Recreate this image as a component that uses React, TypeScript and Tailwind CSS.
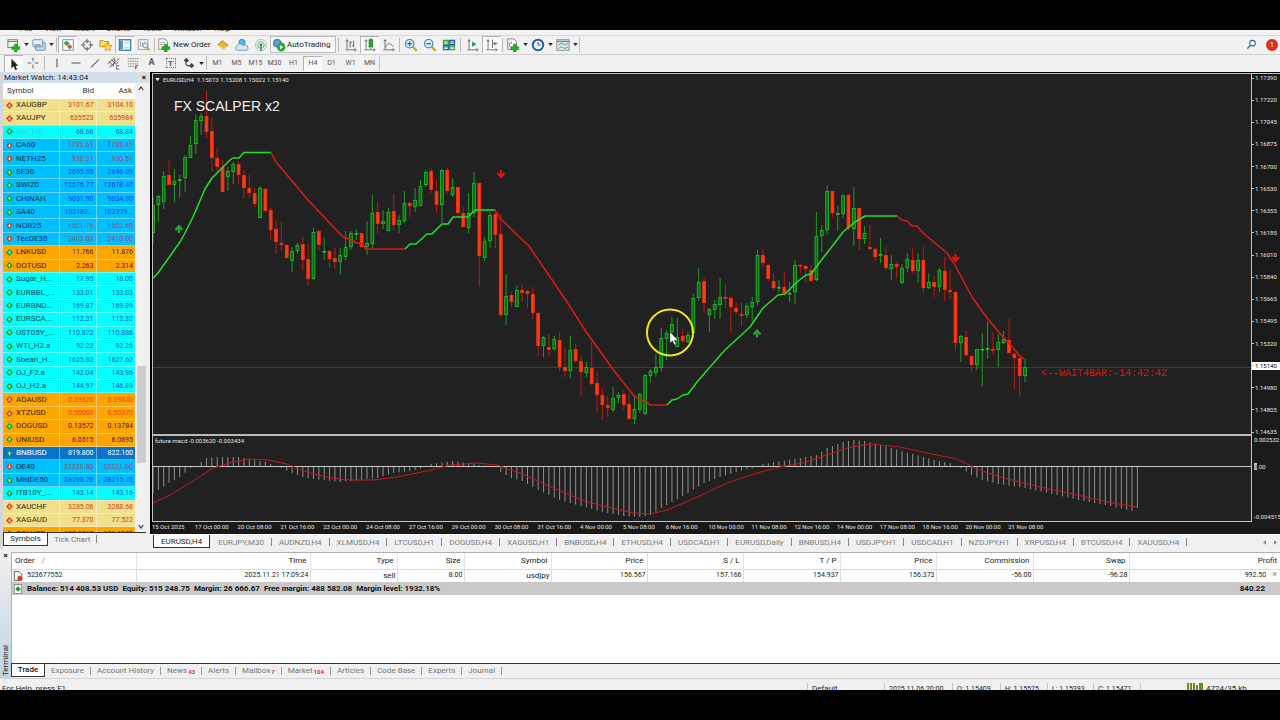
import type { ReactNode } from "react";
import clsx from "clsx";

type Tone = "khaki" | "aqua" | "sky" | "orange" | "active";
type Quote = [symbol: string, bid: string, ask: string, tone: Tone, dir: "up" | "down"];

const quotes: Quote[] = [
  ["XAUGBP", "3101.67", "3104.10", "khaki", "down"],
  ["XAUJPY", "635523", "635984", "khaki", "down"],
  ["VIX_H6", "68.66", "68.84", "aqua", "up"],
  ["CA60", "1782.61", "1783.41", "sky", "down"],
  ["NETH25", "930.31", "930.51", "sky", "down"],
  ["SE30", "2695.65", "2696.09", "sky", "up"],
  ["SWI20", "12676.77", "12678.47", "sky", "up"],
  ["CHINAH", "9031.90", "9034.90", "sky", "up"],
  ["SA40", "102182...", "102379...", "sky", "up"],
  ["NOR25", "1501.75", "1502.65", "sky", "down"],
  ["TecDE30", "3402.00", "3410.00", "sky", "down"],
  ["LNKUSD", "11.766", "11.876", "orange", "up"],
  ["DOTUSD", "2.263", "2.314", "orange", "up"],
  ["Sugar_H...", "17.95", "18.00", "aqua", "up"],
  ["EURBBL_...", "133.01", "133.03", "aqua", "up"],
  ["EURBND...", "169.87", "169.89", "aqua", "up"],
  ["EURSCA...", "112.31", "112.32", "aqua", "up"],
  ["UST05Y_...", "110.872", "110.886", "aqua", "up"],
  ["WTI_H2.a", "92.22", "92.26", "aqua", "up"],
  ["Sbean_H...", "1625.82", "1627.67", "aqua", "up"],
  ["OJ_F2.a", "142.04", "143.96", "aqua", "up"],
  ["OJ_H2.a", "144.97", "146.89", "aqua", "up"],
  ["ADAUSD", "0.39620", "0.39840", "orange", "down"],
  ["XTZUSD", "0.50000", "0.50370", "orange", "down"],
  ["DOGUSD", "0.13572", "0.13784", "orange", "up"],
  ["UNIUSD", "6.0515", "6.0695", "orange", "up"],
  ["BNBUSD", "819.800", "822.100", "active", "up"],
  ["DE40", "23220.80", "23221.60", "sky", "down"],
  ["MidDE50", "28200.70", "28215.70", "sky", "up"],
  ["ITB10Y_...", "143.14", "143.16", "aqua", "up"],
  ["XAUCHF", "3285.06", "3288.68", "khaki", "down"],
  ["XAGAUD", "77.370", "77.522", "khaki", "down"],
  ["SOLUSD", "125.6215", "126.6930", "orange", "up"],
];

const rowTone: Record<Tone, string> = {
  khaki: "bg-[#f0e08c] text-[#2b2618]",
  aqua: "bg-[#00ffff] text-[#0b4a5c]",
  sky: "bg-[#00bfff] text-[#0a2f4d]",
  orange: "bg-[#ffa500] text-[#33240a]",
  active: "bg-[#0a74cc] text-white",
};

const upTone: Record<Tone, string> = {
  khaki: "text-[#1c3fc4]",
  aqua: "text-[#0f5fc0]",
  sky: "text-[#0848e8]",
  orange: "text-[#4a1440]",
  active: "text-white",
};

const downTone: Record<Tone, string> = {
  khaki: "text-[#c8431c]",
  aqua: "text-[#c8431c]",
  sky: "text-[#8a5a72]",
  orange: "text-[#e8480c]",
  active: "text-white",
};

// high, open/close top, open/close bottom, low; 1 = bull, 0 = bear
const candles: number[][] = [
  [197, 205, 233, 243, 1], [195, 196, 205, 222, 1], [171, 176, 202, 209, 1], [160, 175, 185, 185, 0],
  [169, 181, 185, 202, 1], [175, 179, 181, 198, 1], [155, 157, 178, 192, 1], [136, 145, 158, 158, 1],
  [114, 120, 144, 154, 1], [113, 116, 121, 135, 1], [91, 116, 132, 138, 0], [118, 131, 158, 172, 0],
  [148, 158, 167, 172, 0], [160, 167, 192, 192, 0], [167, 171, 177, 191, 1], [162, 164, 172, 184, 1],
  [161, 164, 175, 184, 0], [170, 175, 188, 198, 0], [175, 188, 193, 198, 0], [188, 193, 204, 207, 0],
  [186, 188, 218, 218, 1], [188, 189, 211, 211, 0], [208, 210, 230, 240, 0], [220, 229, 242, 254, 0],
  [222, 243, 245, 251, 0], [244, 245, 258, 258, 0], [247, 251, 261, 272, 1], [243, 245, 251, 254, 1],
  [237, 244, 260, 271, 0], [243, 259, 279, 286, 0], [228, 232, 279, 280, 1], [230, 231, 245, 250, 0],
  [238, 251, 252, 260, 1], [250, 251, 259, 268, 0], [248, 258, 262, 269, 0], [248, 255, 262, 275, 1],
  [231, 247, 257, 260, 1], [231, 233, 247, 250, 1], [229, 233, 234, 240, 1], [233, 233, 247, 248, 0],
  [221, 243, 247, 255, 1], [195, 213, 244, 248, 1], [201, 212, 224, 233, 0], [210, 221, 224, 229, 1],
  [208, 212, 231, 231, 1], [194, 211, 225, 231, 0], [215, 220, 225, 233, 1], [191, 203, 221, 223, 1],
  [202, 203, 206, 217, 0], [188, 200, 207, 212, 1], [180, 186, 206, 206, 1], [170, 172, 185, 187, 1],
  [168, 171, 190, 193, 0], [180, 191, 205, 213, 0], [169, 170, 205, 223, 1], [168, 170, 191, 193, 0],
  [178, 187, 195, 197, 1], [187, 187, 213, 217, 0], [207, 213, 227, 227, 0], [193, 213, 228, 233, 1],
  [172, 183, 213, 217, 1], [183, 183, 256, 287, 0], [237, 241, 258, 261, 1], [212, 215, 241, 248, 1],
  [212, 214, 235, 248, 0], [214, 234, 315, 317, 0], [274, 296, 315, 325, 1], [292, 295, 302, 307, 0],
  [286, 290, 307, 307, 1], [285, 290, 293, 302, 0], [290, 291, 294, 308, 0], [287, 294, 313, 320, 0],
  [312, 313, 346, 356, 0], [336, 337, 346, 357, 1], [334, 347, 350, 356, 0], [336, 339, 349, 351, 1],
  [332, 340, 367, 371, 0], [347, 367, 371, 377, 0], [336, 350, 371, 378, 1], [344, 349, 361, 363, 0],
  [355, 361, 372, 396, 0], [362, 367, 373, 377, 1], [342, 368, 384, 385, 0], [372, 383, 395, 413, 0],
  [388, 395, 405, 420, 0], [396, 405, 408, 417, 0], [387, 398, 410, 412, 1], [392, 395, 398, 403, 1],
  [390, 394, 405, 410, 0], [393, 404, 419, 420, 0], [395, 409, 419, 424, 1], [393, 394, 410, 413, 1],
  [374, 375, 414, 415, 1], [369, 371, 376, 382, 1], [353, 367, 373, 377, 1], [328, 338, 368, 372, 1],
  [330, 333, 339, 360, 1], [317, 324, 332, 335, 1], [318, 337, 347, 347, 1], [329, 336, 341, 343, 0],
  [332, 335, 342, 343, 1], [294, 298, 333, 338, 1], [268, 282, 298, 301, 1], [278, 281, 303, 313, 0],
  [308, 309, 315, 332, 1], [300, 304, 310, 319, 1], [278, 297, 305, 319, 1], [284, 297, 298, 308, 0],
  [296, 298, 307, 333, 0], [302, 308, 312, 314, 0], [303, 314, 315, 326, 0], [303, 306, 315, 318, 1],
  [297, 302, 307, 321, 1], [250, 255, 302, 305, 1], [250, 255, 263, 267, 0], [264, 265, 279, 281, 0],
  [273, 281, 288, 290, 0], [280, 287, 288, 293, 1], [272, 287, 293, 296, 0], [282, 293, 294, 302, 1],
  [260, 265, 292, 304, 1], [264, 265, 266, 273, 0], [265, 266, 269, 283, 0], [265, 270, 281, 282, 0],
  [212, 236, 280, 281, 1], [225, 230, 236, 252, 1], [185, 191, 230, 235, 1], [191, 191, 213, 217, 0],
  [206, 213, 215, 231, 1], [195, 195, 214, 218, 1], [194, 195, 228, 230, 0], [187, 208, 229, 246, 1],
  [208, 208, 239, 250, 0], [226, 233, 239, 244, 1], [225, 247, 249, 250, 0], [248, 249, 257, 261, 0],
  [238, 254, 256, 263, 1], [247, 255, 268, 270, 0], [255, 264, 269, 280, 1], [263, 264, 267, 279, 0],
  [264, 268, 283, 284, 1], [253, 259, 268, 272, 1], [248, 260, 271, 273, 0], [253, 260, 271, 283, 1],
  [247, 260, 288, 293, 0], [273, 282, 288, 289, 1], [276, 282, 287, 297, 0], [268, 270, 287, 292, 1],
  [257, 271, 290, 301, 0], [269, 290, 292, 299, 0], [292, 292, 343, 351, 0], [335, 336, 343, 362, 1],
  [331, 337, 355, 357, 0], [355, 356, 365, 372, 0], [349, 349, 365, 370, 1], [333, 349, 350, 386, 1],
  [321, 348, 350, 359, 1], [332, 349, 350, 355, 0], [334, 342, 350, 367, 1], [331, 339, 343, 344, 1],
  [319, 340, 353, 353, 0], [352, 354, 358, 389, 0], [358, 358, 376, 397, 0], [359, 367, 376, 382, 1],
];

const maUp = [
  "153,278 158,273 180,242 185,233 193,217 205,189 212,178 222,168 230,160 233,158 239,158 244,152.5 271,152.5",
  "405,249 410,244 416,244 427,234 432,234 442,224 448,224 453,217 468,217 475,210 495,210",
  "667,405 672,400 677,399 683,395 688,394 697,382 710,367 725,350 750,327 763,308 778,295 785,294 797,282 806,275 811,274 820,262 837,240 843,232 855,222 865,216 897,216",
];
const maDown = [
  "271,152.5 276,162 308,200 325,218 343,237 349,239 357,243 362,244 366,249 405,249",
  "495,210 500,218 515,233 529,246 565,299 587,333 612,368 634,396 639,399 647,402 650,405 667,405",
  "897,216 902,220 907,221 912,226 917,226 923,233 947,253 955,265 972,297 987,318 1003,337 1008,342 1020,356 1024,359",
];

// bar index, bar end; values between are interpolated
const macdKeys: number[][] = [
  [0, 493], [1, 490], [3, 483], [5, 477], [7, 468], [8, 466], [9, 462], [10, 458], [12, 457], [16, 457],
  [19, 460], [21, 462], [23, 466], [24, 468], [26, 473], [28, 477], [30, 479], [35, 482], [39, 480],
  [42, 478], [45, 473], [48, 471], [51, 467], [52, 464], [56, 461], [61, 465], [63, 466], [64, 467],
  [65, 472], [67, 478], [69, 481], [72, 490], [76, 500], [80, 506], [84, 512], [88, 516], [91, 517],
  [93, 515], [95, 508], [97, 502], [100, 493], [103, 483], [106, 477], [109, 472], [112, 468], [114, 464],
  [116, 462], [120, 459], [124, 455], [126, 448], [129, 442], [131, 440], [133, 441], [136, 445],
  [140, 451], [144, 457], [146, 460], [149, 463], [150, 466], [151, 468], [153, 475], [155, 480],
  [158, 484], [163, 488], [168, 494], [173, 500], [178, 505], [183, 511], [184, 508],
];

const macdBars = Array.from({ length: 185 }, (_, i) => {
  const k = macdKeys.findIndex(([n]) => n >= i);
  const [n1, y1] = macdKeys[k];
  if (n1 === i) return y1;
  const [n0, y0] = macdKeys[k - 1];
  return y0 + ((y1 - y0) * (i - n0)) / (n1 - n0);
});

const signal =
  "153,503 170,495 190,483 213,468 233,462 250,459 268,460 287,464 307,472 330,478 350,480 373,480 397,477 427,471 450,465 477,463 497,465 520,473 553,488 587,502 613,508 633,513 650,514 667,510 693,499 727,483 757,473 780,467 803,463 827,455 847,448 870,444 900,447 927,453 957,459 977,469 1000,477 1040,487 1077,495 1113,503 1137,507";

const prices = [
  "1.17390", "1.17220", "1.17045", "1.16875", "1.16700", "1.16530", "1.16355", "1.16185", "1.16010",
  "1.15840", "1.15665", "1.15495", "1.15320", "1.15140", "1.14980", "1.14805", "1.14635",
];

const dates = [
  "15 Oct 2025", "17 Oct 00:00", "20 Oct 08:00", "21 Oct 16:00", "23 Oct 00:00", "24 Oct 08:00",
  "27 Oct 16:00", "29 Oct 00:00", "30 Oct 08:00", "31 Oct 16:00", "4 Nov 00:00", "5 Nov 08:00",
  "6 Nov 16:00", "10 Nov 00:00", "11 Nov 08:00", "12 Nov 16:00", "14 Nov 00:00", "17 Nov 08:00",
  "18 Nov 16:00", "20 Nov 00:00", "21 Nov 08:00",
];

const chartTabs = [
  "EURUSD,H4", "EURJPY,M30", "AUDNZD,H4", "XLMUSD,H4", "LTCUSD,H1", "DOGUSD,H4", "XAGUSD,H1", "BNBUSD,H4",
  "ETHUSD,H4", "USDCAD,H1", "EURUSD,Daily", "BNBUSD,H4", "USDJPY,H1", "USDCAD,H1", "NZDJPY,H1", "XRPUSD,H4",
  "BTCUSD,H4", "XAUUSD,H4",
];

const terminalTabs: [string, string?][] = [
  ["Trade"], ["Exposure"], ["Account History"], ["News", "43"], ["Alerts"], ["Mailbox", "7"],
  ["Market", "104"], ["Articles"], ["Code Base"], ["Experts"], ["Journal"],
];

const X0 = 153;
const STEP = 5.35;

function Icon({ children, size = "size-[14px]" }: { children: ReactNode; size?: string }) {
  return (
    <svg viewBox="0 0 16 16" className={clsx("shrink-0", size)} fill="none" aria-hidden="true">
      {children}
    </svg>
  );
}

function Caret() {
  return (
    <svg viewBox="0 0 6 4" className="w-[5px] h-[3px] shrink-0" aria-hidden="true">
      <path d="M0 0h6L3 4z" fill="#222" />
    </svg>
  );
}

function Tool({ label, pressed, caret, children }: { label: string; pressed?: boolean; caret?: boolean; children: ReactNode }) {
  return (
    <button
      type="button"
      aria-label={label}
      className={clsx(
        "h-[17px] shrink-0 flex items-center justify-center gap-[3px]",
        caret ? "w-[25px]" : "w-[19px]",
        pressed && "bg-[#fafafa] border-l border-t border-[#b4b4b4]"
      )}
    >
      {children}
      {caret && <Caret />}
    </button>
  );
}

function Sep({ wide }: { wide?: boolean }) {
  return (
    <span className={clsx("shrink-0 flex justify-center", wide ? "w-[5px]" : "w-[3px]")}>
      <span className="w-px h-[14px] bg-[#b8b8b8]" />
    </span>
  );
}

const Plus = () => <path d="M8.5 7h3v3h3v3h-3v3h-3v-3h-3v-3h3z" fill="#22b02a" stroke="#0d7a17" strokeWidth=".6" />;
const Axes = () => <path d="M3.5 2v11M1.5 13.5h12M2 4l1.500-2 1.500 2M12 12l2 1.500-2 1.500" stroke="#666" strokeWidth="1" />;

function StandardToolbar() {
  return (
    <div className="h-[19px] flex items-center pl-[5px] pb-px border-t border-[#d8d8d8] bg-[#f1f1f1]">
      <Tool label="New chart" caret>
        <Icon>
          <rect x="1" y="2" width="11" height="9" fill="#e9f6e9" stroke="#4a8a5a" />
          <path d="M1 4h11" stroke="#4a8a5a" />
          <Plus />
        </Icon>
      </Tool>
      <Tool label="Profiles" caret>
        <Icon>
          <rect x="4" y="5" width="11" height="9" rx="1" fill="#c6dcef" stroke="#5b87ad" />
          <rect x="1" y="2" width="11" height="8" rx="1" fill="#eaf4fc" stroke="#5b87ad" />
          <path d="M3 8h7" stroke="#5b87ad" strokeWidth="1.500" />
        </Icon>
      </Tool>
      <Sep />
      <Tool label="Market Watch" pressed>
        <Icon>
          <rect x="2" y="2" width="12" height="12" fill="#fff" stroke="#5f87a8" />
          <path d="M3 6l3-3 4 3-3 3z" fill="#35a23a" />
          <path d="M7 10l3-3 3 3-3 3z" fill="#e2552c" />
        </Icon>
      </Tool>
      <Tool label="Data Window">
        <Icon>
          <circle cx="8" cy="8" r="4.500" stroke="#666" strokeWidth="1.200" />
          <path d="M8 1v5M8 10v5M1 8h5M10 8h5" stroke="#666" strokeWidth="1.200" />
        </Icon>
      </Tool>
      <Tool label="Navigator">
        <Icon>
          <path d="M1 3h4l1 1h5v6H1z" fill="#f9dc72" stroke="#b78d1f" />
          <path d="M10 5l1.600 3.200 3.400.5-2.500 2.400.6 3.500L10 13l-3.100 1.600.6-3.500L5 8.700l3.400-.5z" fill="#ffd83a" stroke="#b78d1f" strokeWidth=".8" />
        </Icon>
      </Tool>
      <Tool label="Terminal" pressed>
        <Icon>
          <rect x="1.500" y="2" width="13" height="12" fill="#eef6fc" stroke="#39739f" strokeWidth="1.400" />
          <path d="M2 3h3.500v10H2z" fill="#4f93c4" />
          <path d="M7 5.500h6M7 11h6" stroke="#b9d4e8" />
        </Icon>
      </Tool>
      <Tool label="Strategy Tester">
        <Icon>
          <rect x="1.500" y="2" width="11" height="11" fill="#f7f7f7" stroke="#8e9aa4" />
          <path d="M4 4v6M6.500 5v5M9 4v4" stroke="#8e9aa4" />
          <circle cx="9.500" cy="8.500" r="2.800" fill="#d9ecfa" stroke="#6a8cab" />
          <path d="M11.500 11l3 3" stroke="#c9a227" strokeWidth="2" />
        </Icon>
      </Tool>
      <Sep />
      <button type="button" className="flex items-center gap-[2px] h-[17px] w-[57px] pl-px shrink-0 text-[#222] text-[8px] whitespace-nowrap">
        <Icon>
          <path d="M2 1h7l3 3v9H2z" fill="#fff" stroke="#888" />
          <path d="M4 5h5M4 7.500h4" stroke="#999" />
          <Plus />
        </Icon>
        New Order
      </button>
      <Tool label="MetaEditor">
        <Icon>
          <path d="M2 8l5-5 7 5.500-5 4.500z" fill="#eeb52c" stroke="#a8780e" />
          <path d="M2 8.500l7 4L14 9" stroke="#fff0b0" />
        </Icon>
      </Tool>
      <Tool label="Virtual Hosting">
        <Icon>
          <circle cx="8" cy="5" r="3.500" fill="#5fb2e8" stroke="#2d7fb8" />
          <path d="M2 14a3 3 0 010-5 4 4 0 017-.5 3 3 0 014.500 5.500z" fill="#d7e6f3" stroke="#6b93b5" />
        </Icon>
      </Tool>
      <Tool label="Signals">
        <Icon>
          <circle cx="8" cy="8" r="6.300" stroke="#a9bcb0" />
          <circle cx="8" cy="8" r="3.800" stroke="#6fa583" />
          <circle cx="8" cy="8" r="1.700" fill="#2c9b4b" />
          <path d="M8 8v7" stroke="#2c9b4b" strokeWidth="1.600" />
        </Icon>
      </Tool>
      <button
        type="button"
        className="flex items-center gap-px h-[17px] w-[66px] pl-px shrink-0 border border-[#bdbdbd] bg-[#f8f8f8] text-[#222] text-[8px] whitespace-nowrap"
      >
        <Icon>
          <path d="M2 8l5-5 7 4-5 5z" fill="#f2c233" stroke="#aa8413" />
          <circle cx="6" cy="6" r="4.500" fill="#5f9fca" stroke="#35709a" />
          <circle cx="10.500" cy="10.500" r="4.800" fill="#25a834" />
          <path d="M9 8l4 2.500L9 13z" fill="#fff" />
        </Icon>
        AutoTrading
      </button>
      <Sep wide />
      <Tool label="Bar Chart">
        <Icon>
          <Axes />
          <path d="M7 4v7M7 5h2M11 3v7M11 9H9" stroke="#555" />
        </Icon>
      </Tool>
      <Tool label="Candlesticks" pressed>
        <Icon>
          <Axes />
          <path d="M9 0v13" stroke="#138a28" />
          <rect x="7" y="2" width="4" height="8" fill="#22b02a" stroke="#138a28" />
        </Icon>
      </Tool>
      <Tool label="Line Chart">
        <Icon>
          <Axes />
          <path d="M4 11c2-6 5-6 9-1" stroke="#666" />
        </Icon>
      </Tool>
      <Sep />
      <Tool label="Zoom In">
        <Icon>
          <path d="M10 10l4.500 4.500" stroke="#c9a227" strokeWidth="2.600" />
          <circle cx="6.500" cy="6.500" r="4.800" fill="#d9effc" stroke="#3a80b4" strokeWidth="1.300" />
          <path d="M4 6.500h5M6.500 4v5" stroke="#1f6fae" strokeWidth="1.500" />
        </Icon>
      </Tool>
      <Tool label="Zoom Out">
        <Icon>
          <path d="M10 10l4.500 4.500" stroke="#c9a227" strokeWidth="2.600" />
          <circle cx="6.500" cy="6.500" r="4.800" fill="#d9effc" stroke="#3a80b4" strokeWidth="1.300" />
          <path d="M4 6.500h5" stroke="#1f6fae" strokeWidth="1.500" />
        </Icon>
      </Tool>
      <Tool label="Tile Windows">
        <Icon>
          <path d="M1 2h7v6H1zM8 8h7v6H8z" fill="#3aa640" />
          <path d="M8 2h7v6H8zM1 8h7v6H1z" fill="#2f62ad" />
          <path d="M2.500 4.500h4M9.500 4.500h4M2.500 10.500h4M9.500 10.500h4M2.500 6h4M9.500 6h4M2.500 12h4M9.500 12h4" stroke="#fff" />
        </Icon>
      </Tool>
      <Sep wide />
      <Tool label="Auto Scroll">
        <Icon>
          <Axes />
          <path d="M7 4l5 3-5 3z" fill="#1f8f78" />
        </Icon>
      </Tool>
      <Tool label="Chart Shift" pressed>
        <Icon>
          <Axes />
          <path d="M8.500 2v9" stroke="#555" />
          <path d="M14 6.500H10M12 4.500L10 6.500l2 2" stroke="#444" />
        </Icon>
      </Tool>
      <Sep />
      <Tool label="Indicators" caret>
        <Icon>
          <path d="M2 1h7l3 3v9H2z" fill="#fff" stroke="#777" />
          <path d="M4 10V6h2V4" stroke="#777" />
          <Plus />
        </Icon>
      </Tool>
      <Tool label="Periods" caret>
        <Icon>
          <circle cx="8" cy="8" r="6" fill="#eef6ff" stroke="#1d5fa8" strokeWidth="2.200" />
          <path d="M8 4.500V8h3" stroke="#333" />
        </Icon>
      </Tool>
      <Tool label="Templates" caret>
        <Icon>
          <rect x="1" y="2" width="14" height="12" fill="#e3eef2" stroke="#6c8794" />
          <path d="M1 4h14" stroke="#6c8794" strokeWidth="1.500" />
          <path d="M3 8l3-2 4 2 4-2M3 12l3-2 4 2 4-2" stroke="#4f8a78" />
        </Icon>
      </Tool>
      <span className="w-px h-[16px] bg-[#c4c4c4]" />
      <div className="ml-auto flex items-center gap-[9px] pr-[2px]">
        <button type="button" aria-label="Search" className="flex">
          <Icon size="size-[11px]">
            <circle cx="9.500" cy="6" r="4" fill="#fff" stroke="#3c5fa0" strokeWidth="1.500" />
            <path d="M6.500 9L2 14" stroke="#3c5fa0" strokeWidth="2" />
          </Icon>
        </button>
        <button
          type="button"
          aria-label="Notifications"
          className="size-[12px] rounded-full bg-[#d8321e] text-white text-[7px] leading-[12px] text-center"
        >
          1
        </button>
      </div>
    </div>
  );
}

function LineToolbar() {
  return (
    <div className="h-[18px] flex items-center pl-[4px] pb-px border-t border-[#d0d0d0] bg-[#f1f1f1]">
      <Tool label="Cursor" pressed>
        <Icon>
          <path d="M5 2v11l2.700-2.500L9.500 15l2-.9-1.800-4.200H13z" fill="#222" />
        </Icon>
      </Tool>
      <Tool label="Crosshair">
        <Icon>
          <path d="M8 2v4M8 10v4M2 8h4M10 8h4" stroke="#666" strokeWidth="1.200" />
        </Icon>
      </Tool>
      <Sep wide />
      <Tool label="Vertical line">
        <Icon>
          <path d="M8 3v10" stroke="#555" strokeWidth="1.200" />
        </Icon>
      </Tool>
      <Tool label="Horizontal line">
        <Icon>
          <path d="M3 8h10" stroke="#555" strokeWidth="1.200" />
        </Icon>
      </Tool>
      <Tool label="Trendline">
        <Icon>
          <path d="M3.500 13l9-9" stroke="#555" strokeWidth="1.200" />
        </Icon>
      </Tool>
      <Tool label="Equidistant Channel">
        <Icon>
          <path d="M1 9l8-7M3 13l11-10M2 6l5 5M5 4l5 5M7 12L9 3M10 10l3-3M14 11h-3v4h3" stroke="#555" />
        </Icon>
      </Tool>
      <Tool label="Fibonacci">
        <Icon>
          <path d="M2 3h12M2 6h12M2 9h12M2 12h7" stroke="#888" strokeDasharray="2 .6" />
          <path d="M11 15v-4h3M11 13h2" stroke="#555" />
        </Icon>
      </Tool>
      <button type="button" className="w-[19px] text-[9px] font-bold text-[#555]">A</button>
      <button type="button" aria-label="Text label" className="w-[19px] flex justify-center">
        <span className="size-[10px] border border-dotted border-[#777] text-[8px] leading-[9px] font-bold text-[#555]">T</span>
      </button>
      <Tool label="Arrows" caret>
        <Icon>
          <path d="M2 5l3-3 3 3-3 3zM8 11l3 3 3-3-3-3z" fill="#444" />
          <path d="M4 8l2 3h3" stroke="#444" strokeWidth="1.400" />
        </Icon>
      </Tool>
      <Sep />
      {["M1", "M5", "M15", "M30", "H1", "H4", "D1", "W1", "MN"].map((tf) => (
        <button
          key={tf}
          type="button"
          className={clsx(
            "w-[19px] h-[15px] shrink-0 text-center text-[7px] text-[#555]",
            tf === "H4" && "bg-[#fafafa] border-l border-t border-[#b4b4b4]"
          )}
        >
          {tf}
        </button>
      ))}
      <span className="w-px h-[15px] bg-[#c4c4c4]" />
    </div>
  );
}

function MarketWatch() {
  return (
    <section className="w-[150px] shrink-0 flex flex-col border-l-[3px] border-[#d3d7dc] bg-[#f0f0f0]">
      <div className="h-[11px] flex items-center justify-between pr-[4px] pl-px bg-[#d3dfea]">
        <h2 className="text-[8px] leading-[11px] text-[#1c2530]">Market Watch: 14:43:04</h2>
        <button type="button" aria-label="Close" className="text-[8px] leading-[10px] font-bold text-black">×</button>
      </div>
      <div className="flex h-[449px] overflow-hidden">
        <table className="w-[132px] h-[458px] shrink-0 table-fixed border-collapse">
          <colgroup>
            <col className="w-[56px]" />
            <col className="w-[37px]" />
            <col />
          </colgroup>
          <thead className="bg-white text-[8px] text-[#333]">
            <tr className="h-[16px]">
              <th className="text-left font-normal pl-[4px] py-0">Symbol</th>
              <th className="text-right font-normal pr-[2px] py-0">Bid</th>
              <th className="text-right font-normal pr-[3px] py-0">Ask</th>
            </tr>
          </thead>
          <tbody className="leading-[10px]">
            {quotes.map(([symbol, bid, ask, tone, dir]) => (
              <tr key={symbol} className={clsx("border-b border-white/40", rowTone[tone])}>
                <td className="p-0">
                  <span className="flex items-center gap-[3px] pl-[3px] text-[8px] whitespace-nowrap">
                    <svg viewBox="0 0 8 8" className="size-[7px] shrink-0" aria-hidden="true">
                      <path d="M4 0l4 4-4 4-4-4z" fill={dir === "up" ? "#16a02c" : "#cf4420"} />
                      <path d={dir === "up" ? "M4 2l2 2H4.500v2h-1V4H2z" : "M4 6l2-2H4.500V2h-1v2H2z"} fill="#fff" opacity=".8" />
                    </svg>
                    <span className={clsx(symbol === "VIX_H6" && "text-[#5cc9cf]")}>{symbol}</span>
                  </span>
                </td>
                {[bid, ask].map((value, n) => (
                  <td
                    key={n}
                    className={clsx(
                      "py-0 pl-0 pr-[2px] text-right text-[7px] border-l border-white/40",
                      dir === "up" ? upTone[tone] : downTone[tone]
                    )}
                  >
                    {value}
                  </td>
                ))}
              </tr>
            ))}
          </tbody>
        </table>
        <div className="w-[12px] shrink-0 flex flex-col items-center justify-between py-[3px]">
          <svg viewBox="0 0 8 6" className="w-[6px] h-[5px]" fill="none" aria-hidden="true">
            <path d="M1 5l3-4 3 4" stroke="#333" strokeWidth="1.500" />
          </svg>
          <div className="w-[9px] flex-1 flex flex-col">
            <span className="flex-[275]" />
            <span className="flex-[97] bg-[#cdcdcd]" />
            <span className="flex-[61]" />
          </div>
          <svg viewBox="0 0 8 6" className="w-[6px] h-[5px]" fill="none" aria-hidden="true">
            <path d="M1 1l3 4 3-4" stroke="#333" strokeWidth="1.500" />
          </svg>
        </div>
      </div>
      <div className="flex items-start border-t border-[#333] mr-[4px] text-[8px] leading-[12px]">
        <button type="button" className="w-[45px] h-[13px] bg-white border-b border-x border-[#333] text-[#222]">Symbols</button>
        <button type="button" className="px-[6px] h-[13px] text-[#777]">Tick Chart</button>
        <span className="w-px h-[8px] mt-[2px] bg-[#888]" />
      </div>
    </section>
  );
}

function Candles() {
  return (
    <g>
      {candles.map(([high, top, bottom, low, bull], i) => {
        const x = X0 + i * STEP;
        return (
          <g key={i}>
            <path d={`M${x} ${high}V${low}`} stroke={bull ? "#1f9a24" : "#b81c12"} strokeWidth="1" />
            <rect
              x={x - 1.4}
              y={top + 0.4}
              width={2.8}
              height={Math.max(bottom - top - 0.8, 0.8)}
              fill={bull ? "#0b6b12" : "#ff3c17"}
              stroke={bull ? "#22b52a" : "#f5300f"}
              strokeWidth=".9"
            />
          </g>
        );
      })}
    </g>
  );
}

function Arrow({ x, y, up }: { x: number; y: number; up?: boolean }) {
  return (
    <path
      transform={`translate(${x} ${y})`}
      d={up ? "M-3.500 1L0-3l3.500 4M0-2.500V4" : "M-3.500-1L0 3l3.500-4M0 2.500V-4"}
      stroke={up ? "#1faa35" : "#e81414"}
      strokeWidth="2"
      fill="none"
    />
  );
}

function Chart() {
  return (
    <svg viewBox="153 74 1098 447" preserveAspectRatio="none" className="w-full h-[447px] block" role="img" aria-label="EURUSD H4 chart">
      <rect x="153" y="74" width="1098" height="447" fill="#212121" />
      <path d="M153 367.500H1251" stroke="#3c3c3c" />
      <Candles />
      <g fill="none" strokeWidth="1.500" strokeLinejoin="round">
        {maUp.map((points) => (
          <polyline key={points} points={points} stroke="#22e02c" />
        ))}
        {maDown.map((points) => (
          <polyline key={points} points={points} stroke="#d81c1c" />
        ))}
      </g>
      <Arrow x={179} y={229} up />
      <Arrow x={757} y={333.5} up />
      <Arrow x={501} y={174} />
      <Arrow x={955.5} y={258} />
      <rect x="153" y="434" width="1098" height="2" fill="#b9b9b9" />
      <path d={macdBars.map((y, i) => `M${X0 + i * STEP} 466.500V${y}`).join("")} stroke="#9c9c9c" strokeWidth=".9" />
      <path d="M153 466.500H1251" stroke="#c8c8c8" />
      <polyline points={signal} fill="none" stroke="#c01a1f" strokeWidth="1" />
      <circle cx="670" cy="332.500" r="23" fill="none" stroke="#ece81e" strokeWidth="2" />
      <path d="M670 332v11l2.500-2.200 1.800 4 1.700-.8-1.800-3.800h3.500z" fill="#fff" stroke="#444" strokeWidth=".4" />
    </svg>
  );
}

function ChartPanel() {
  return (
    <section className="flex-1 min-w-0 flex flex-col bg-[#f0f0f0]">
      <div className="bg-[#1a1a1a] border-t border-l-2 border-black text-[#e4e4e4]">
        <div className="flex border-t border-l border-[#c4c4c4]">
          <div className="relative flex-1 min-w-0 border-r border-b border-[#c4c4c4]">
            <Chart />
            <p className="absolute left-[2px] top-px flex items-center gap-[3px] text-[6px] leading-[9px] whitespace-pre">
              <svg viewBox="0 0 6 4" className="w-[5px] h-[3px]" aria-hidden="true">
                <path d="M0 0h6L3 4z" fill="#fff" />
              </svg>
              EURUSD,H4  1.15073 1.15208 1.15022 1.15140
            </p>
            <h1 className="absolute left-[21px] top-[24px] text-[14px] leading-[16px] text-[#f0f0f0] font-['Liberation_Sans',sans-serif]">
              FX SCALPER x2
            </h1>
            <p className="absolute right-[84px] top-[294px] text-[10px] leading-[12px] text-[#dc1414] font-['Liberation_Mono',monospace]">
              &lt;--WAIT4BAR:-14:42:42
            </p>
            <p className="absolute left-[2px] top-[363px] text-[6px] leading-[8px]">future macd -0.003620 -0.003434</p>
          </div>
          <div className="w-[28px] shrink-0 overflow-hidden text-[6px] leading-[8px]">
            <ul className="h-[362px] flex flex-col justify-between">
              {prices.map((price) => (
                <li key={price} className={clsx("flex items-center gap-px", price === "1.15140" && "bg-white text-black")}>
                  <span className="w-[2px] h-px bg-[#c4c4c4]" />
                  {price}
                </li>
              ))}
            </ul>
            <ul className="h-[85px] flex flex-col justify-between pl-[2px] whitespace-nowrap">
              <li>0.002532</li>
              <li className="mb-[23px]">
                <span className="bg-[#c4c4c4] text-[#555]">0</span>.00
              </li>
              <li>-0.004515</li>
            </ul>
          </div>
        </div>
        <ul className="h-[12px] w-[79.7%] grid grid-cols-[repeat(21,minmax(0,1fr))] text-[6px] leading-[10px] whitespace-nowrap">
          {dates.map((date) => (
            <li key={date}>{date}</li>
          ))}
        </ul>
      </div>
      <div className="flex h-[15px] border-t border-white text-[8px] leading-[13px] overflow-hidden">
        <nav className="flex pl-[3px]">
          {chartTabs.map((tab, i) =>
            i === 0 ? (
              <button key={i} type="button" className="h-[13px] px-[7px] mr-px bg-white border-x border-b border-[#333] text-[#222]">
                {tab}
              </button>
            ) : (
              <span key={i} className="flex items-center">
                <button type="button" className="px-[7px] text-[#7d7d7d]">{tab}</button>
                <span className="w-px h-[8px] bg-[#888]" />
              </span>
            )
          )}
        </nav>
        <span className="ml-auto flex items-center gap-[8px] pr-[3px]">
          <svg viewBox="0 0 4 6" className="w-[3px] h-[5px]" aria-hidden="true">
            <path d="M4 0v6L0 3z" fill="#888" />
          </svg>
          <svg viewBox="0 0 4 6" className="w-[3px] h-[5px]" aria-hidden="true">
            <path d="M0 0v6l4-3z" fill="#888" />
          </svg>
        </span>
      </div>
    </section>
  );
}

const columns: [string, string, string][] = [
  ["Time", "w-[174px]", "2025.11.21 17:09:24"],
  ["Type", "w-[87px]", "sell"],
  ["Size", "w-[67px]", "8.00"],
  ["Symbol", "w-[87px]", "usdjpy"],
  ["Price", "w-[96px]", "156.567"],
  ["S / L", "w-[96px]", "157.166"],
  ["T / P", "w-[97px]", "154.937"],
  ["Price", "w-[96px]", "156.373"],
  ["Commission", "w-[97px]", "-56.00"],
  ["Swap", "w-[96px]", "-96.28"],
];

function Terminal() {
  return (
    <section className="flex bg-[#f0f0f0] border-b border-[#d4d4d4]">
      <div className="w-[11px] shrink-0 flex flex-col items-center justify-between pt-[3px] pb-[2px] bg-linear-to-b from-[#f0f0f0] to-[#c3d3e2]">
        <button type="button" aria-label="Close terminal" className="text-[8px] leading-[8px] font-bold text-black">×</button>
        <h2 className="[writing-mode:vertical-rl] rotate-180 text-[8px] leading-[10px] text-[#222]">Terminal</h2>
      </div>
      <div className="flex-1 min-w-0 pt-[3px]">
        <div className="min-h-[111px] bg-white border-t border-[#b0b0b0] border-l">
          <table className="w-full table-fixed border-collapse text-[#222] text-[8px] leading-[11px]">
            <thead>
              <tr className="h-[16px] border-b border-[#dcdcdc]">
                <th className="w-[124px] py-0 pl-[3px] text-left font-normal border-r border-[#e4e4e4]">
                  Order <span className="ml-[5px] text-[#888]">/</span>
                </th>
                {columns.map(([name, width], i) => (
                  <th key={i} className={clsx("py-0 pl-0 pr-[3px] text-right font-normal border-r border-[#e4e4e4]", width)}>
                    {name}
                  </th>
                ))}
                <th className="py-0 pl-0 pr-[3px] text-right font-normal">Profit</th>
              </tr>
            </thead>
            <tbody>
              <tr className="h-[13px]">
                <td className="py-0 pl-px pr-0 border-r border-[#dcdcdc]">
                  <span className="flex items-center gap-[4px] text-[7px]">
                    <Icon size="size-[10px]">
                      <path d="M2 1h8l4 4v10H2z" fill="#fff" stroke="#555" strokeWidth="1.500" />
                      <circle cx="11" cy="11.500" r="4" fill="#c9481c" />
                    </Icon>
                    523677552
                  </span>
                </td>
                {columns.map(([, , value], i) => (
                  <td key={i} className={clsx("py-0 pl-0 pr-px text-right border-r border-[#dcdcdc]", /\d/.test(value) && "text-[7px]")}>
                    {value}
                  </td>
                ))}
                <td className="py-0 pl-0 pr-[3px] text-right text-[7px]">
                  992.50
                  <button type="button" aria-label="Close order" className="ml-[6px] text-[9px] leading-[8px] text-[#777]">×</button>
                </td>
              </tr>
              <tr className="h-[13px] bg-[#c9c9c9] font-bold text-[#111]">
                <td colSpan={11} className="py-0 pl-px pr-0">
                  <span className="flex items-center gap-[4px] whitespace-pre">
                    <Icon size="size-[10px]">
                      <rect x="2" y="1" width="12" height="14" fill="#fff" stroke="#777" strokeWidth="1.200" />
                      <path d="M8 3.500L12.500 8 8 12.500 3.500 8z" fill="#1c9a34" />
                    </Icon>
                    Balance: 514 408.53 USD  Equity: 515 248.75  Margin: 26 666.67  Free margin: 488 582.08  Margin level: 1932.18%
                  </span>
                </td>
                <td className="py-0 pl-0 pr-[15px] text-right">840.22</td>
              </tr>
            </tbody>
          </table>
        </div>
        <nav className="flex border-t border-[#333] h-[15px] text-[8px] leading-[12px] text-[#777]">
          {terminalTabs.map(([name, count], i) =>
            i === 0 ? (
              <button key={name} type="button" className="h-[13px] w-[34px] bg-white border-x border-b border-[#333] text-[#111] font-medium">
                {name}
              </button>
            ) : (
              <span key={name} className="flex items-center h-[13px]">
                <button type="button" className="px-[6px]">
                  {name}
                  {count && <sub className="ml-px text-[6px] font-bold text-[#d0304c]">{count}</sub>}
                </button>
                <span className="w-px h-[8px] bg-[#999]" />
              </span>
            )
          )}
        </nav>
      </div>
    </section>
  );
}

function StatusBar() {
  const cell = "shrink-0 pl-[4px] border-l border-[#c4c4c4]";
  return (
    <footer className="flex h-[11px] overflow-hidden pl-[2px] pt-[4px] bg-[#f0f0f0] text-[8px] leading-[12px] text-[#222] whitespace-nowrap">
      <span className="flex-1">For Help, press F1</span>
      <span className={clsx(cell, "w-[77px]")}>Default</span>
      <span className={clsx(cell, "w-[68px] text-[7px]")}>2025.11.06 20:00</span>
      <span className={clsx(cell, "w-[48px] text-[7px]")}>O: 1.15409</span>
      <span className={clsx(cell, "w-[47px] text-[7px]")}>H: 1.15525</span>
      <span className={clsx(cell, "w-[46px] text-[7px]")}>L: 1.15393</span>
      <span className={clsx(cell, "w-[47px] text-[7px]")}>C: 1.15471</span>
      <span className={clsx(cell, "w-[140px] flex items-start gap-[3px] pl-[46px]")}>
        <svg viewBox="0 0 16 10" className="w-[16px] h-[10px]" aria-hidden="true">
          <path d="M1 0v9M4 0v9M7 0v9M10 2v7M13 0v9M15 0v9" stroke="#6d8a1e" strokeWidth="2" />
        </svg>
        4724/35 kb
      </span>
    </footer>
  );
}

export default function App() {
  return (
    <div className="min-h-screen bg-black py-[30px] font-[Roboto,'Open_Sans',sans-serif]">
      <nav className="h-[5px] overflow-hidden flex items-end gap-[12px] pl-[20px] pb-px bg-[#f1f1f1] text-[8px] leading-[10px] text-[#222]">
        {["File", "View", "Insert", "Charts", "Tools", "Window", "Help"].map((item) => (
          <button key={item} type="button">{item}</button>
        ))}
      </nav>
      <StandardToolbar />
      <LineToolbar />
      <main className="flex">
        <MarketWatch />
        <ChartPanel />
      </main>
      <Terminal />
      <StatusBar />
    </div>
  );
}
